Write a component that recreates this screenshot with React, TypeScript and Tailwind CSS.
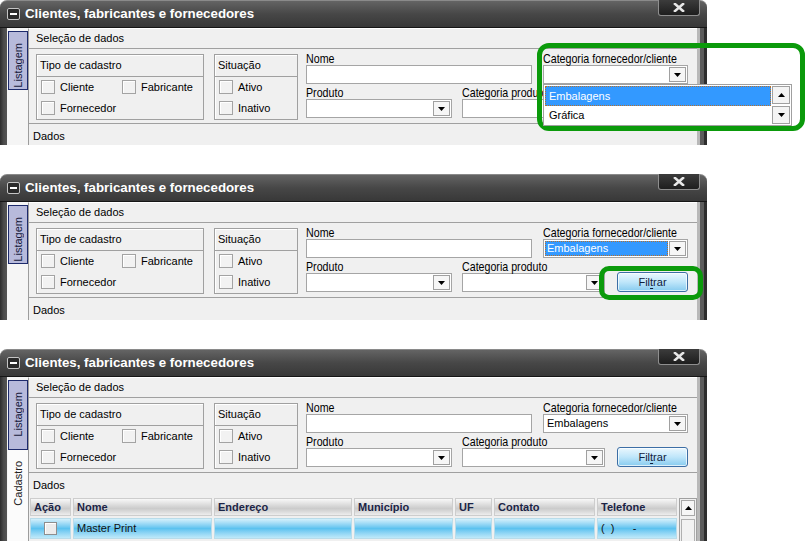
import React from "react";

const SANS = "font-['Liberation_Sans',Arial,sans-serif]";

function Arrow({ up = false }: { up?: boolean }) {
  return (
    <svg width="7" height="4" viewBox="0 0 7 4">
      <polygon points={up ? "0,4 7,4 3.5,0" : "0,0 7,0 3.5,4"} fill="#000" />
    </svg>
  );
}

function DropBtn() {
  return (
    <span className="w-[17px] h-[15px] border border-[#a0a0a0] bg-[#f6f6f6] flex items-center justify-center shrink-0">
      <Arrow />
    </span>
  );
}

function Check({ small = false }: { small?: boolean }) {
  return small ? (
    <span className="w-[13px] h-[13px] border border-[#8e8e8e] bg-[#ececec] shadow-[inset_1px_1px_0_#fff]" />
  ) : (
    <span className="w-[14px] h-[14px] border border-[#a3a3a3] bg-[#f2f2f2] shadow-[inset_1px_1px_0_#fff] shrink-0" />
  );
}

function CheckItem({ label }: { label: string }) {
  return (
    <div className="flex items-center gap-[5px] h-[14px] text-[11px] text-black">
      <Check />
      <span>{label}</span>
    </div>
  );
}

function Group({ title, width, children }: { title: string; width: string; children: React.ReactNode }) {
  return (
    <div className={`${width} h-[66px] mt-[3px] border border-[#a0a0a0] shadow-[inset_1px_1px_0_#fff] flex flex-col shrink-0`}>
      <div className="h-[22px] border-b border-[#a0a0a0] flex items-center pl-[3px] text-[11px] text-black">
        {title}
      </div>
      <div className="pt-[3px] pl-[4px]">{children}</div>
    </div>
  );
}

function Label({ children }: { children: React.ReactNode }) {
  return (
    <div className="h-[14px] leading-[16px] text-[13px] text-black whitespace-nowrap">
      <span className="inline-block origin-left scale-x-[0.82]">{children}</span>
    </div>
  );
}

function Select({ value, highlighted = false }: { value?: string; highlighted?: boolean }) {
  return (
    <div className="h-[19px] border border-[#a5a5a5] bg-white flex items-center pr-[1px]">
      <div className="flex-1 h-full p-[1px] flex">
        {value ? (
          highlighted ? (
            <div className="flex-1 bg-[#3399ff] border border-dotted border-[#b5702e] text-white text-[11px] flex items-center pl-[1px]">
              {value}
            </div>
          ) : (
            <div className="flex-1 text-[11px] text-black flex items-center pl-[2px]">{value}</div>
          )
        ) : null}
      </div>
      <DropBtn />
    </div>
  );
}

function DropList() {
  return (
    <div className="absolute left-0 top-full w-[249px] h-[42px] bg-white border border-[#a0a0a0] flex p-[1px] z-10">
      <div className="flex-1 flex flex-col">
        <div className="h-[20px] bg-[#3399ff] border border-dotted border-[#b5702e] text-white text-[11px] flex items-center pl-[3px]">
          Embalagens
        </div>
        <div className="h-[19px] flex items-center pl-[4px] text-[11px] text-black">Gráfica</div>
      </div>
      <div className="w-[18px] flex flex-col justify-between ml-[1px]">
        <span className="h-[18px] border border-[#a0a0a0] bg-[#f4f4f4] flex items-center justify-center">
          <Arrow up />
        </span>
        <span className="h-[18px] border border-[#a0a0a0] bg-[#f4f4f4] flex items-center justify-center">
          <Arrow />
        </span>
      </div>
    </div>
  );
}

function Filtrar() {
  return (
    <div className="ml-[12px] w-[71px] h-[20px] rounded-[3px] border border-[#3c6ea5] bg-gradient-to-b from-[#eaf7fe] via-[#bfe6fa] to-[#86cbef] shadow-[inset_0_0_0_1px_rgba(255,255,255,0.7)] flex items-center justify-center text-[11px] text-[#10203c]">
      Fil<span className="underline underline-offset-[2px]">t</span>rar
    </div>
  );
}

function Form({ v }: { v: 1 | 2 | 3 }) {
  return (
    <div className="h-[75px] shrink-0 border-b border-[#a0a0a0] flex items-start pl-[7px] pt-[2px]">
      <Group title="Tipo de cadastro" width="w-[168px]">
        <div className="grid grid-cols-[81px_auto] gap-y-[7px]">
          <CheckItem label="Cliente" />
          <CheckItem label="Fabricante" />
          <CheckItem label="Fornecedor" />
        </div>
      </Group>
      <div className="ml-[10px]">
        <Group title="Situação" width="w-[84px]">
          <div className="flex flex-col gap-[7px]">
            <CheckItem label="Ativo" />
            <CheckItem label="Inativo" />
          </div>
        </Group>
      </div>
      <div className="ml-[8px] flex flex-col">
        <div className="flex">
          <div className="w-[226px]">
            <Label>Nome</Label>
            <div className="h-[19px] border border-[#a5a5a5] bg-white" />
          </div>
          <div className="w-[145px] ml-[11px] relative">
            <Label>Categoria fornecedor/cliente</Label>
            {v === 1 && <Select />}
            {v === 2 && <Select value="Embalagens" highlighted />}
            {v === 3 && <Select value="Embalagens" />}
            {v === 1 && <DropList />}
          </div>
        </div>
        <div className="flex items-end mt-[1px]">
          <div className="w-[146px]">
            <Label>Produto</Label>
            <Select />
          </div>
          <div className="w-[143px] ml-[10px]">
            <Label>Categoria produto</Label>
            <Select />
          </div>
          <Filtrar />
        </div>
      </div>
    </div>
  );
}

const COLS = [
  { t: "Ação", w: "w-[41px]" },
  { t: "Nome", w: "w-[139px]" },
  { t: "Endereço", w: "w-[138px]" },
  { t: "Município", w: "w-[99px]" },
  { t: "UF", w: "w-[37px]" },
  { t: "Contato", w: "w-[101px]" },
  { t: "Telefone", w: "w-[80px]" },
];

function Table() {
  const row = ["", "Master Print", "", "", "", "", "(  )      -"];
  return (
    <div className="flex pl-[1px]">
      <div className="w-[647px] flex flex-col">
        <div className="flex gap-[2px]">
          {COLS.map((c) => (
            <div
              key={c.t}
              className={`${c.w} h-[18px] border border-[#cdcdcd] bg-gradient-to-b from-[#f8f8f8] via-[#cbcbcb] via-60% to-[#ededed] flex items-center pl-[3px] text-[11px] font-bold text-[#1b2446]`}
            >
              {c.t}
            </div>
          ))}
        </div>
        <div className="flex gap-[2px] mt-[2px]">
          {COLS.map((c, i) => (
            <div
              key={c.t}
              className={`${c.w} h-[21px] border border-[#b9dcea] bg-gradient-to-b from-[#d4f0fb] via-[#5cc2ef] via-50% to-[#bfe9f9] flex items-center text-[11px] text-[#111] whitespace-pre ${i === 0 ? "justify-center" : "pl-[3px]"}`}
            >
              {i === 0 ? <Check small /> : row[i]}
            </div>
          ))}
        </div>
      </div>
      <div className="ml-[2px] w-[18px] h-[50px] border border-[#a0a0a0] bg-[#f0f0f0] flex flex-col p-[1px]">
        <span className="h-[16px] border border-[#a8a8a8] bg-[#f6f6f6] flex items-center justify-center">
          <Arrow up />
        </span>
        <span className="mt-[3px] flex-1 border border-[#b0b0b0] border-b-0 bg-[#f2f2f2]" />
      </div>
    </div>
  );
}

function TabStrip({ v }: { v: 1 | 2 | 3 }) {
  return (
    <div className="w-[21px] bg-[#f5f5f5] flex flex-col pt-[3px] pl-[1px]">
      <div
        className={`w-[20px] ${v === 3 ? "h-[70px]" : "h-[59px]"} bg-[#b7badb] border border-[#1d2a6b] flex flex-col items-center pt-[11px]`}
      >
        <span className="[writing-mode:vertical-rl] rotate-180 text-[11px] text-[#15183a] leading-[18px]">Listagem</span>
      </div>
      {v === 3 && (
        <div className="w-[20px] flex-1 bg-[#fbfbfb] flex flex-col items-center pt-[11px]">
          <span className="[writing-mode:vertical-rl] rotate-180 text-[11px] text-[#222] leading-[18px]">Cadastro</span>
        </div>
      )}
    </div>
  );
}

function TitleBar() {
  return (
    <div className="h-[28px] shrink-0 rounded-t-[7px] border-t border-[#8a8a8a] bg-gradient-to-b from-[#646464] via-[#474747] to-[#383838] border-b border-b-[#161616] flex items-center">
      <span className="ml-[7px] w-[13px] h-[12px] rounded-[2px] border border-[#c4c4c4] bg-[#2a2a2a] flex items-center justify-center shrink-0">
        <span className="w-[7px] h-[2px] bg-white" />
      </span>
      <span className="ml-[5px] text-white font-bold text-[13.3px] leading-none">Clientes, fabricantes e fornecedores</span>
      <div className="self-start ml-auto mr-[7px] -mt-px w-[42px] h-[16px] rounded-b-[3px] border border-t-0 border-[#8f8f8f] bg-gradient-to-b from-[#3c3c3c] to-[#1e1e1e] flex items-center justify-center">
        <svg width="12" height="9" viewBox="0 0 12 9">
          <path d="M2 1 L10 8 M10 1 L2 8" stroke="#e8e8e8" strokeWidth="2.6" strokeLinecap="square" />
        </svg>
      </div>
    </div>
  );
}

function Win({ v }: { v: 1 | 2 | 3 }) {
  return (
    <div className="w-[707px] h-full flex flex-col">
      <TitleBar />
      <div className="flex flex-1 min-h-0">
        <div className="w-[7px] bg-gradient-to-r from-[#2c2c2c] via-[#4a4a4a] to-[#555]" />
        <TabStrip v={v} />
        <div className="w-[669px] bg-[#f0f0f0] border-l border-[#9c9c9c] border-t border-t-white flex flex-col">
          <div className="h-[20px] shrink-0 border-b border-[#a0a0a0] flex items-center pl-[7px] text-[11px] text-black">
            Seleção de dados
          </div>
          <Form v={v} />
          <div className="h-[25px] shrink-0 flex items-center pl-[4px] text-[11px] text-black">Dados</div>
          {v === 3 && <Table />}
        </div>
        <div className="w-[3px] bg-[#b8b8b8]" />
        <div className="w-[4px] bg-[#5c5c5c]" />
        <div className="w-[3px] bg-[#2e2e2e]" />
      </div>
    </div>
  );
}

export default function App() {
  return (
    <div className={`w-[805px] h-[541px] bg-white flex flex-col gap-[29px] overflow-hidden ${SANS}`}>
      <div className="relative h-[145px] shrink-0 overflow-hidden">
        <Win v={1} />
        <div className="absolute left-[537px] top-[43px] w-[268px] h-[88px] border-[5px] border-[#0b9a0b] rounded-[12px]" />
      </div>
      <div className="relative h-[146px] shrink-0 overflow-hidden">
        <Win v={2} />
        <div className="absolute left-[599px] top-[92px] w-[104px] h-[34px] border-[5px] border-[#0b9a0b] rounded-[10px]" />
      </div>
      <div className="relative h-[192px] shrink-0 overflow-hidden">
        <Win v={3} />
      </div>
    </div>
  );
}
